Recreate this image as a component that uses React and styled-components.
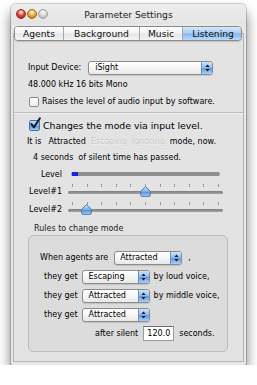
import React from 'react';
import styled, { createGlobalStyle } from 'styled-components';

const Global = createGlobalStyle`
  html, body { margin: 0; background: #fff; }
  body {
    font-family: "DejaVu Sans", Verdana, sans-serif;
    font-size: 8px;
    color: #000;
  }
`;

const Page = styled.div`
  padding: 4px 0 0 11px;
`;

const Window = styled.div`
  width: 235px;
  height: 361px;
  box-sizing: border-box;
  padding-bottom: 3px;
  display: flex;
  flex-direction: column;
  background: #e8e8e8;
  border-radius: 5px 5px 2px 2px;
  box-shadow: 0 0 0 1px rgba(0, 0, 0, 0.16), 0 8px 13px rgba(0, 0, 0, 0.55);
`;

const TitleBar = styled.div`
  height: 20px;
  display: grid;
  grid-template-columns: 1fr auto 1fr;
  align-items: center;
  border-radius: 5px 5px 0 0;
  background: linear-gradient(#eeeeee, #e4e4e4);
`;

const Lights = styled.div`
  display: flex;
  gap: 1px;
  padding-left: 5px;
`;

const Light = styled.span`
  width: 10px;
  height: 10px;
  border-radius: 50%;
  box-sizing: border-box;
  border: 1px solid ${p => p.$edge};
  background: radial-gradient(circle at 50% 30%, #fff 0, ${p => p.$c} 45%, ${p => p.$d} 100%);
`;

const Title = styled.div`
  font-size: 9.2px;
  color: #222;
`;

const TabBar = styled.div`
  position: relative;
  z-index: 1;
  margin: 2px 0 -8px 3px;
  width: 228px;
  height: 15px;
  box-sizing: border-box;
  display: grid;
  grid-template-columns: 48px 76px 43px 61px;
  border: 1px solid #8a8a8a;
  border-radius: 4px;
  overflow: hidden;
  box-shadow: 0 1px 1px rgba(0, 0, 0, 0.15);
`;

const Tab = styled.div`
  display: flex;
  align-items: center;
  justify-content: center;
  font-size: 9.2px;
  color: #111;
  border-left: ${p => (p.$first ? 'none' : '1px solid #a8a8a8')};
  background: ${p =>
    p.$active
      ? 'linear-gradient(#d6e8fb 0%, #a9cdf3 48%, #84b6ee 52%, #b9dcfb 100%)'
      : 'linear-gradient(#ffffff 0%, #f3f3f3 48%, #e6e6e6 52%, #f4f4f4 100%)'};
`;

const Panel = styled.div`
  flex: 1;
  margin: 0 2px;
  padding-top: 25px;
  border: 1px solid #b4b4b4;
  background: #e3e3e3;
  display: flex;
  flex-direction: column;
`;

const Line = styled.div`
  height: ${p => p.$h || 17}px;
  margin-top: ${p => p.$mt || 0}px;
  padding-left: ${p => p.$indent || 14}px;
  display: flex;
  align-items: center;
  gap: ${p => (p.$gap === undefined ? 5 : p.$gap)}px;
  font-size: ${p => p.$fs || 8}px;
  white-space: nowrap;
`;

const Separator = styled.div`
  margin-top: 2px;
  height: 1px;
  background: #bdbdbd;
  border-bottom: 1px solid #f2f2f2;
`;

const Dim = styled.span`
  color: #cacaca;
  text-shadow: 0 1px 0 #f4f4f4;
`;

const Popup = styled.div`
  width: ${p => p.$w}px;
  height: 14px;
  box-sizing: border-box;
  display: flex;
  align-items: stretch;
  border: 1px solid #8c8c8c;
  border-radius: 3px;
  overflow: hidden;
  background: linear-gradient(#ffffff 0%, #f6f6f6 50%, #e8e8e8 100%);
  box-shadow: 0 1px 1px rgba(0, 0, 0, 0.12);
`;

const PopupText = styled.span`
  flex: 1;
  display: flex;
  align-items: center;
  padding-left: ${p => p.$pad || 6}px;
`;

const PopupCap = styled.span`
  width: 10px;
  display: flex;
  align-items: center;
  justify-content: center;
  border-left: 1px solid #6d8fbd;
  background: linear-gradient(#cfe4fb 0%, #8fbdf0 48%, #5d9be6 52%, #a9d0f8 100%);
`;

const Arrows = () => (
  <svg width="5" height="8" viewBox="0 0 5 8">
    <path d="M2.5 0.5 L4.6 3 L0.4 3 Z M2.5 7.5 L4.6 5 L0.4 5 Z" fill="#1a1a2a" />
  </svg>
);

const PopUp = ({ w, label, pad }) => (
  <Popup $w={w}>
    <PopupText $pad={pad}>{label}</PopupText>
    <PopupCap>
      <Arrows />
    </PopupCap>
  </Popup>
);

const Box = styled.span`
  width: ${p => p.$s}px;
  height: ${p => p.$s}px;
  box-sizing: border-box;
  flex-shrink: 0;
  display: flex;
  align-items: center;
  justify-content: center;
  border: 1px solid ${p => (p.$on ? '#4a6ea0' : '#8a8a8a')};
  border-radius: 2px;
  background: ${p =>
    p.$on
      ? 'linear-gradient(#c6e0fa 0%, #8ebcf0 50%, #5e9ae4 55%, #9fcaf6 100%)'
      : 'linear-gradient(#ffffff, #ececec)'};
`;

const Check = styled.svg`
  margin: -4px -2px 0 0;
`;

const CheckBox = ({ size, on }) => (
  <Box $s={size} $on={on}>
    {on && (
      <Check width="12" height="13" viewBox="0 0 12 13">
        <path d="M1.5 7.2 L4.3 10.6 L10.8 0.8" fill="none" stroke="#0d1730" strokeWidth="2.2" strokeLinejoin="round" strokeLinecap="round" />
      </Check>
    )}
  </Box>
);

const LevelGrid = styled.div`
  display: grid;
  grid-template-columns: 48px 1fr;
  column-gap: 6px;
  margin-right: 20px;
`;

const LevelLabel = styled.div`
  height: ${p => p.$h}px;
  display: flex;
  align-items: center;
  justify-content: flex-end;
`;

const Meter = styled.div`
  align-self: center;
  margin: 0 3px;
  height: 4px;
  border-radius: 2px;
  background: #8e8e8e;
  display: flex;
`;

const MeterFill = styled.div`
  height: 4px;
  margin-left: 1px;
  background: #1424e6;
`;

const Slider = styled.div`
  position: relative;
  height: 18px;
  display: flex;
  flex-direction: column;
`;

const Ticks = styled.div`
  margin-top: 2px;
  padding: 0 4px;
  height: 3px;
  display: flex;
  justify-content: space-between;
`;

const Tick = styled.span`
  width: 1px;
  height: 3px;
  background: #9a9a9a;
`;

const Track = styled.div`
  margin-top: 4px;
  height: 3px;
  border-radius: 2px;
  background: linear-gradient(#7c7c7c, #a4a4a4);
`;

const Knob = styled.svg`
  position: absolute;
  top: 4px;
`;

const LevelSlider = ({ value }) => (
  <Slider>
    <Ticks>
      {Array.from({ length: 11 }, (_, i) => (
        <Tick key={i} />
      ))}
    </Ticks>
    <Track />
    <Knob
      width="11"
      height="11"
      viewBox="0 0 11 11"
      style={{ left: `calc(4px + ${value} * (100% - 8px) - 5.5px)` }}
    >
      <defs>
        <linearGradient id="kb" x1="0" y1="0" x2="0" y2="1">
          <stop offset="0" stopColor="#d4e8fc" />
          <stop offset="0.5" stopColor="#76aef0" />
          <stop offset="0.55" stopColor="#4d8fe2" />
          <stop offset="1" stopColor="#a8d2fa" />
        </linearGradient>
      </defs>
      <path d="M5.5 0.6 L10.3 5.2 L10.3 9.3 Q10.3 10.4 9.2 10.4 L1.8 10.4 Q0.7 10.4 0.7 9.3 L0.7 5.2 Z" fill="url(#kb)" stroke="#5a6f8c" strokeWidth="0.9" />
    </Knob>
  </Slider>
);

const GroupTitle = styled.div`
  height: 14px;
  margin-top: 3px;
  padding-left: 20px;
  display: flex;
  align-items: center;
  color: #222;
`;

const Group = styled.div`
  width: 200px;
  height: 117px;
  box-sizing: border-box;
  margin-left: 14px;
  padding-top: 12px;
  border: 1px solid #bcbcbc;
  border-radius: 5px;
  background: #dcdcdc;
`;

const Field = styled.div`
  width: 31px;
  height: 15px;
  box-sizing: border-box;
  display: flex;
  align-items: center;
  justify-content: flex-end;
  padding-right: 3px;
  background: #fff;
  border: 1px solid #9b9b9b;
  border-top-color: #6e6e6e;
`;

const App = () => (
  <Page>
    <Global />
    <Window>
      <TitleBar>
        <Lights>
          <Light $c="#e8463f" $d="#9c1410" $edge="#8a2a26" />
          <Light $c="#f0b030" $d="#b86a08" $edge="#9a6a1c" />
          <Light $c="#d8d8d8" $d="#a8a8a8" $edge="#a0a0a0" />
        </Lights>
        <Title>Parameter Settings</Title>
        <span />
      </TitleBar>

      <TabBar>
        <Tab $first>Agents</Tab>
        <Tab>Background</Tab>
        <Tab>Music</Tab>
        <Tab $active>Listening</Tab>
      </TabBar>

      <Panel>
        <Line $gap={7}>
          <span>Input Device:</span>
          <PopUp w={125} label="iSight" />
        </Line>
        <Line>48.000 kHz 16 bits Mono</Line>
        <Line $indent={15} $gap={3}>
          <CheckBox size={10} />
          <span>Raises the level of audio input by software.</span>
        </Line>
        <Separator />
        <Line $h={16} $mt={3} $indent={15} $gap={3} $fs={9.3}>
          <CheckBox size={11} on />
          <span>Changes the mode via input level.</span>
        </Line>
        <Line $h={16} $indent={13}>
          <span>It is</span>
          <span style={{ marginLeft: 2 }}>Attracted</span>
          <Dim>Escaping</Dim>
          <Dim>Ignoring</Dim>
          <span>mode, now.</span>
        </Line>
        <Line $indent={19}>
          <span>4 seconds</span>
          <span>of silent time has passed.</span>
        </Line>

        <LevelGrid>
          <LevelLabel $h={16}>Level</LevelLabel>
          <Meter>
            <MeterFill style={{ width: '6px' }} />
          </Meter>
          <LevelLabel $h={18}>Level#1</LevelLabel>
          <LevelSlider value={0.5} />
          <LevelLabel $h={18}>Level#2</LevelLabel>
          <LevelSlider value={0.1} />
        </LevelGrid>

        <GroupTitle>Rules to change mode</GroupTitle>
        <Group>
          <Line $h={19} $indent={11} $gap={6}>
            <span>When agents are</span>
            <PopUp w={68} label="Attracted" pad={5} />
            <span>,</span>
          </Line>
          <Line $h={19} $indent={15} $gap={4}>
            <span>they get</span>
            <PopUp w={68} label="Escaping" />
            <span>by loud voice,</span>
          </Line>
          <Line $h={19} $indent={15} $gap={4}>
            <span>they get</span>
            <PopUp w={68} label="Attracted" />
            <span>by middle voice,</span>
          </Line>
          <Line $h={19} $indent={15} $gap={4}>
            <span>they get</span>
            <PopUp w={68} label="Attracted" />
          </Line>
          <Line $h={19} $indent={66} $gap={5}>
            <span>after silent</span>
            <Field>120.0</Field>
            <span>seconds.</span>
          </Line>
        </Group>
      </Panel>
    </Window>
  </Page>
);

export default App;
